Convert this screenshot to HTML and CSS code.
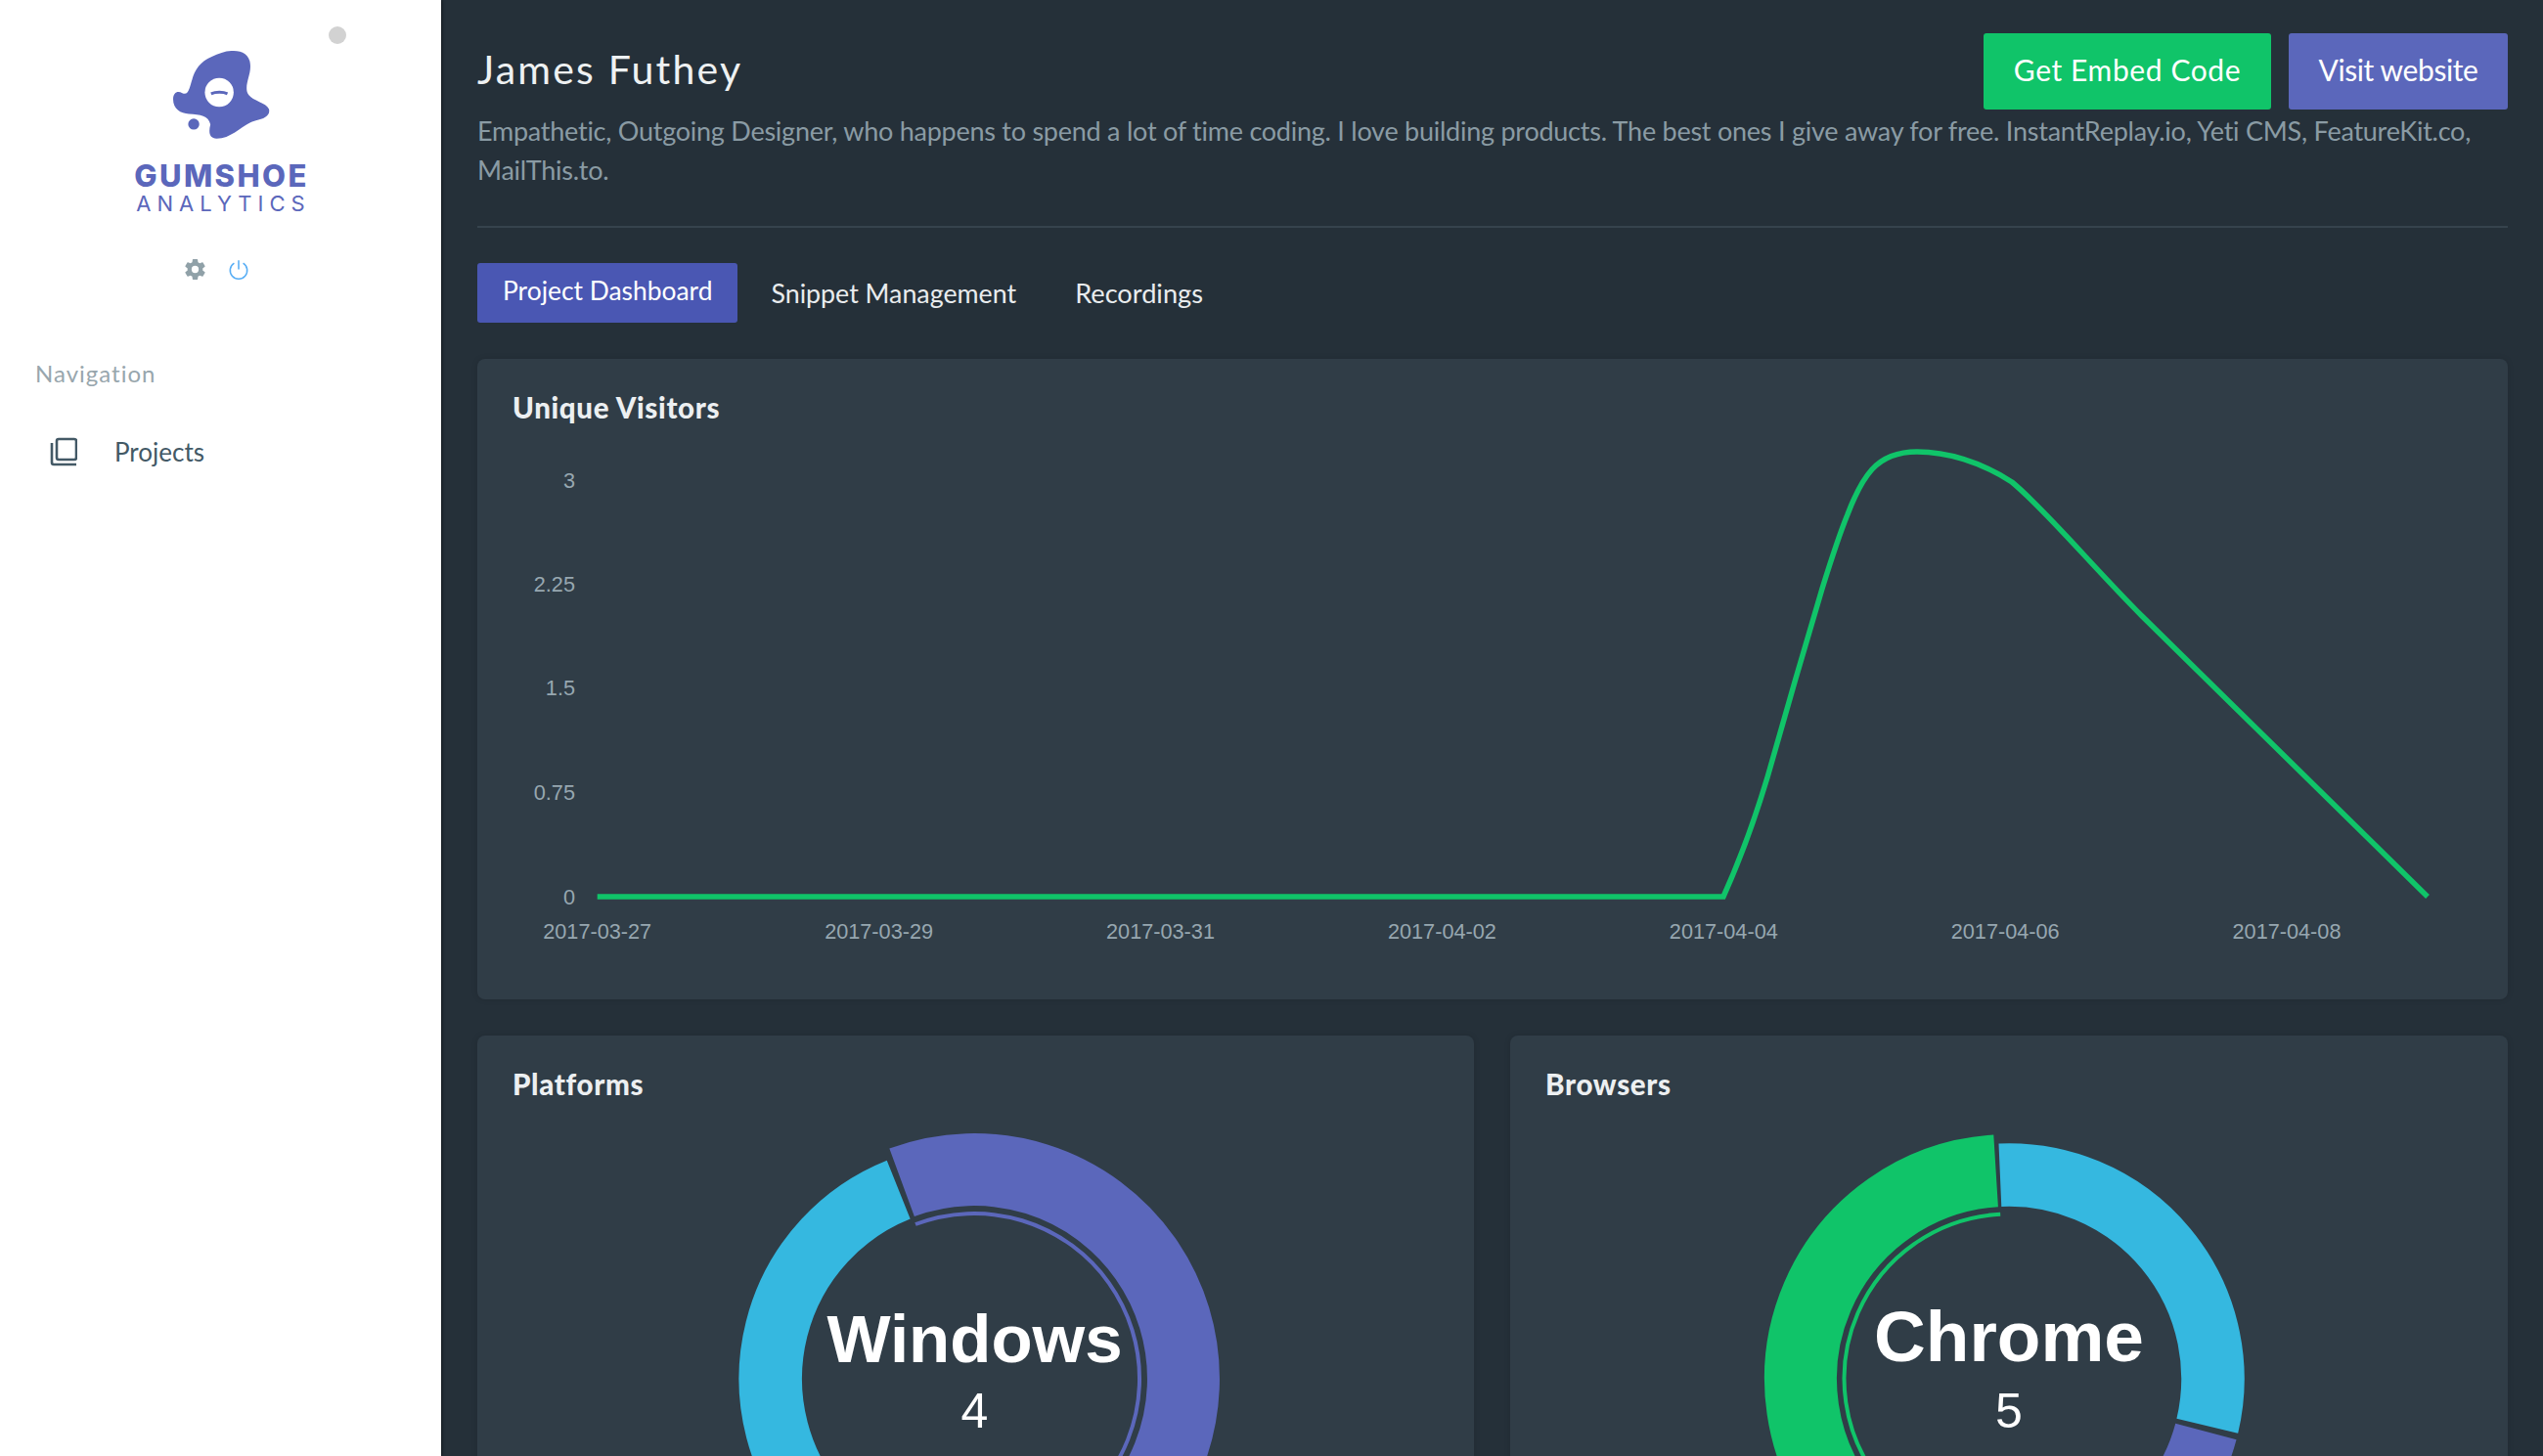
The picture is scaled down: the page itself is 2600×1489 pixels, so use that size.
FILE: index.html
```html
<!DOCTYPE html>
<html lang="en">

<head>
    <meta charset="UTF-8">
    <meta name="viewport" content="width=device-width, initial-scale=1.0">
    <title>Gumshoe Analytics</title>
    <link rel="stylesheet" href="styles.css">
</head>

<body>
    <div class="app">
        <aside class="sidebar">
            <span class="status-dot"></span>
            <div class="logo">
                <svg class="logo-mark" viewBox="127 85 320 290">
                    <path class="logo-fill" d="M320 97C350 95 376 105 378 140C380 170 362 195 368 222C376 250 425 252 435 275C440 295 420 305 395 310C355 318 325 365 275 365C252 365 250 345 256 322C250 295 225 292 190 290C165 288 142 275 142 245C142 225 155 218 170 226C190 236 193 205 200 185C208 155 225 130 260 115C280 105 300 98 320 97Z" />
                    <circle class="logo-eye" cx="283" cy="224" r="44" />
                    <path class="logo-brow" d="M258 228C272 222 295 222 308 228" />
                    <circle class="logo-fill" cx="205" cy="321" r="17" />
                </svg>
                <div class="logo-name">GUMSHOE</div>
                <div class="logo-sub">ANALYTICS</div>
            </div>
            <div class="user-icons">
                <svg class="icon-gear" viewBox="0 0 24 24">
                    <path d="M12 15.5A3.5 3.5 0 0 1 8.5 12 3.5 3.5 0 0 1 12 8.5a3.5 3.5 0 0 1 3.5 3.5 3.5 3.5 0 0 1-3.5 3.5m7.43-2.53c.04-.32.07-.64.07-.97 0-.33-.03-.66-.07-1l2.11-1.63c.19-.15.24-.42.12-.64l-2-3.46c-.12-.22-.39-.31-.61-.22l-2.49 1c-.52-.39-1.06-.73-1.69-.98l-.37-2.65A.506.506 0 0 0 14 2h-4c-.25 0-.46.18-.5.42l-.37 2.65c-.63.25-1.17.59-1.69.98l-2.49-1c-.22-.09-.49 0-.61.22l-2 3.46c-.13.22-.07.49.12.64L4.57 11c-.04.34-.07.67-.07 1 0 .33.03.65.07.97l-2.11 1.66c-.19.15-.25.42-.12.64l2 3.46c.12.22.39.3.61.22l2.49-1.01c.52.4 1.06.74 1.69.99l.37 2.65c.04.24.25.42.5.42h4c.25 0 .46-.18.5-.42l.37-2.65c.63-.26 1.17-.59 1.69-.99l2.49 1.01c.22.08.49 0 .61-.22l2-3.46c.12-.22.07-.49-.12-.64l-2.11-1.66z" />
                </svg>
                <svg class="icon-power" viewBox="0 0 24 24">
                    <path d="M12 2v10M7 5a9.5 9.5 0 1 0 10 0" />
                </svg>
            </div>
            <div class="nav-title">Navigation</div>
            <a class="nav-item" href="#">
                <svg class="icon-projects" viewBox="0 0 28 30">
                    <rect x="7" y="2" width="20" height="21" rx="2" />
                    <path d="M2 6v20a2 2 0 0 0 2 2h23" />
                </svg>
                <span>Projects</span>
            </a>
        </aside>

        <main class="main">
            <header class="head">
                <h1 class="head-title">James Futhey</h1>
                <div class="head-actions">
                    <a class="btn btn-green" href="#">Get Embed Code</a>
                    <a class="btn btn-purple" href="#">Visit website</a>
                </div>
            </header>
            <p class="bio">Empathetic, Outgoing Designer, who happens to spend a lot of time coding. I love building products. The best ones I give away for free. InstantReplay.io, Yeti CMS, FeatureKit.co, MailThis.to.</p>
            <hr class="rule">

            <nav class="tabs">
                <a class="tab current" href="#">Project Dashboard</a>
                <a class="tab" href="#">Snippet Management</a>
                <a class="tab" href="#">Recordings</a>
            </nav>

            <section class="card">
                <h2 class="card-title">Unique Visitors</h2>
                <svg class="line-chart" width="2076" height="589" viewBox="0 0 2076 589">
                    <g class="axis axis-y">
                        <text x="100" y="66">3</text>
                        <text x="100" y="172">2.25</text>
                        <text x="100" y="278">1.5</text>
                        <text x="100" y="385">0.75</text>
                        <text x="100" y="492">0</text>
                    </g>
                    <g class="axis axis-x">
                        <text x="122.7" y="527">2017-03-27</text>
                        <text x="410.6" y="527">2017-03-29</text>
                        <text x="698.5" y="527">2017-03-31</text>
                        <text x="986.4" y="527">2017-04-02</text>
                        <text x="1274.3" y="527">2017-04-04</text>
                        <text x="1562.2" y="527">2017-04-06</text>
                        <text x="1850" y="527">2017-04-08</text>
                    </g>
                    <path class="line" d="M122.7 484H1274C1284 462 1303 415 1319 362C1329 326 1362 212 1375 169C1384 140 1392 115 1401 93C1409 72 1417 57 1426 47C1437 35 1452 29 1472 29C1502 29 1537 39 1569 60C1602 87 1652 147 1702 197L1994 484" />
                </svg>
            </section>

            <div class="split">
                <section class="card">
                    <h2 class="card-title">Platforms</h2>
                    <svg class="donut donut-left" width="520" height="520" viewBox="0 0 520 520">
                        <path class="arc-cyan arc-base" d="M100.5 393.9A208.25 208.25 0 0 1 182.7 66.6" />
                        <path class="arc-purple arc-active" d="M186.1 59.2A214 214 0 0 1 423.9 397.6" />
                        <path class="arc-purple arc-thin" d="M200 102A169 169 0 0 1 389.5 368.6" />
                        <text class="donut-name donut-name-win" x="260.5" y="243">Windows</text>
                        <text class="donut-count" x="260.5" y="310">4</text>
                    </svg>
                </section>
                <section class="card">
                    <h2 class="card-title">Browsers</h2>
                    <svg class="donut" width="520" height="520" viewBox="0 0 520 520">
                        <path class="arc-green arc-active" d="M96.8 396.9A213 213 0 0 1 246.6 47.4" />
                        <path class="arc-cyan arc-base" d="M250.9 51.7A208.5 208.5 0 0 1 462.8 308.3" />
                        <path class="arc-purple arc-base" d="M461.4 314A208.5 208.5 0 0 1 419.7 394" />
                        <path class="arc-green arc-thin" d="M131 368.3A168.5 168.5 0 0 1 251.2 91.7" />
                        <text class="donut-name donut-name-chrome" x="260" y="242">Chrome</text>
                        <text class="donut-count" x="260" y="310">5</text>
                    </svg>
                </section>
            </div>
        </main>
    </div>
</body>

</html>
```

FILE: styles.css
```css
* {
    margin: 0;
    padding: 0;
    box-sizing: border-box;
}

html,
body {
    height: 100%;
    overflow: hidden;
}

body {
    font-family: "Lato", "Noto Sans", sans-serif;
    background-color: #253039;
}

a {
    text-decoration: none;
}

.app {
    display: flex;
    height: 1489px;
    overflow: hidden;
}

/* sidebar */

.sidebar {
    position: relative;
    flex: 0 0 451px;
    padding-top: 48px;
    background-color: #fff;
    box-shadow: 1px 0 3px rgba(0, 0, 0, .5);
}

.status-dot {
    position: absolute;
    top: 27px;
    left: 336px;
    width: 18px;
    height: 18px;
    border-radius: 50%;
    background-color: #d2d2d2;
}

.logo {
    text-align: center;
    color: #5b67bb;
}

.logo-mark {
    display: block;
    width: 107px;
    height: 97px;
    margin: 0 auto;
}

.logo-fill {
    fill: #5b67bb;
}

.logo-eye {
    fill: #fff;
}

.logo-brow {
    fill: none;
    stroke: #5b67bb;
    stroke-width: 9;
}

.logo-name {
    margin-top: 17px;
    padding-left: 2px;
    font-family: "Inter", sans-serif;
    font-size: 31px;
    font-weight: 800;
    line-height: 36px;
    letter-spacing: 2.4px;
}

.logo-sub {
    margin-top: -3px;
    padding-left: 6px;
    font-family: "Inter", sans-serif;
    font-size: 22px;
    font-weight: 400;
    line-height: 26px;
    letter-spacing: 6px;
}

.user-icons {
    display: flex;
    justify-content: center;
    gap: 21px;
    margin-top: 42px;
    padding-right: 9px;
}

.icon-gear {
    width: 25px;
    height: 25px;
    fill: #90a1a8;
}

.icon-power {
    width: 22px;
    height: 25px;
    fill: none;
    stroke: #58aef5;
    stroke-width: 1.7;
}

.nav-title {
    margin-top: 79px;
    padding-left: 36px;
    font-size: 24px;
    line-height: 30px;
    color: #98a6ad;
    letter-spacing: 1px;
}

.nav-item {
    display: flex;
    align-items: center;
    gap: 38px;
    margin-top: 50px;
    padding-left: 51px;
    font-size: 26px;
    line-height: 30px;
    color: #435966;
}

.icon-projects {
    width: 28px;
    height: 30px;
    fill: none;
    stroke: #435966;
    stroke-width: 2.6;
}

/* main column */

.main {
    flex: 1;
    min-width: 0;
    padding: 34px 36px 0 37px;
}

.head {
    display: flex;
    justify-content: space-between;
    align-items: flex-start;
}

.head-title {
    padding-top: 13px;
    font-size: 41px;
    font-weight: 400;
    line-height: 48px;
    letter-spacing: 2.2px;
    color: #eef1f2;
}

.head-actions {
    display: flex;
    gap: 18px;
}

.btn {
    height: 78px;
    border-radius: 3px;
    font-size: 30px;
    line-height: 74px;
    text-align: center;
    color: #fff;
}

.btn-green {
    width: 294px;
    background-color: #10c469;
    letter-spacing: .6px;
}

.btn-purple {
    width: 224px;
    background-color: #5b67bb;
    letter-spacing: -.4px;
}

.bio {
    margin-top: 2px;
    font-size: 27px;
    line-height: 40px;
    letter-spacing: -.25px;
    color: #8a9ba4;
}

.rule {
    height: 2px;
    margin-top: 37px;
    border: 0;
    background-color: #36434d;
}

.tabs {
    display: flex;
    align-items: flex-start;
    margin-top: 36px;
}

.tab {
    height: 61px;
    padding: 0 30px 0 34px;
    font-size: 26.8px;
    line-height: 62px;
    color: #e9ecee;
}

.tab:nth-child(3) {
    padding-left: 30px;
    font-size: 27.2px;
}

.tab.current {
    padding: 0 26px;
    font-size: 26.4px;
    line-height: 57px;
    border-radius: 3px;
    background-color: #4a57b3;
    color: #fff;
}

.card {
    height: 655px;
    margin-top: 37px;
    padding-top: 34px;
    border-radius: 8px;
    background-color: #303d47;
    box-shadow: 0 0 6px rgba(0, 0, 0, .12);
}

.card-title {
    padding-left: 36px;
    font-size: 29.5px;
    font-weight: 900;
    line-height: 32px;
    letter-spacing: .65px;
    color: #eceff1;
}

.line-chart {
    display: block;
}

.axis text {
    font-family: "Liberation Sans", Arial, sans-serif;
    font-size: 21.7px;
    fill: #97a7b0;
}

.axis-y text {
    text-anchor: end;
}

.axis-x text {
    text-anchor: middle;
}

.line {
    fill: none;
    stroke: #10c469;
    stroke-width: 5.5;
}

/* donuts */

.split {
    display: grid;
    grid-template-columns: 1019px 1020px;
    gap: 37px;
}

.split .card {
    display: flex;
    flex-direction: column;
}

.donut {
    display: block;
    flex: none;
    margin: 25px auto 0;
}

.donut-left {
    margin-left: 248px;
}

.donut path {
    fill: none;
}

.arc-base {
    stroke-width: 64.5;
}

.arc-active {
    stroke-width: 74;
}

.arc-thin {
    stroke-width: 4;
}

.arc-cyan {
    stroke: #35b8e0;
}

.arc-purple {
    stroke: #5b67bb;
}

.arc-green {
    stroke: #10c469;
}

.donut text {
    font-family: "Liberation Sans", Arial, sans-serif;
    text-anchor: middle;
    fill: #fff;
}

.donut-name {
    font-weight: 700;
}

.donut-name-win {
    font-size: 69px;
}

.donut-name-chrome {
    font-size: 73px;
}

.donut-count {
    font-size: 50px;
}
```
